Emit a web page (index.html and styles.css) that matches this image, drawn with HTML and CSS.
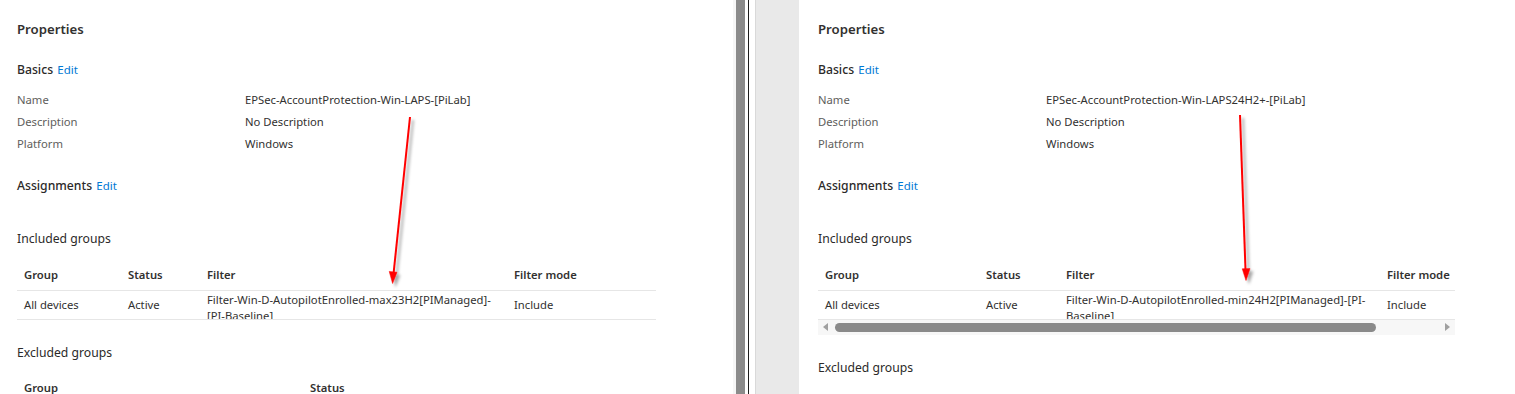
FILE: index.html
```html
<!DOCTYPE html>
<html lang="en">
<head>
<meta charset="utf-8">
<title>Properties</title>
<link rel="stylesheet" href="styles.css">
</head>
<body>
<div class="screen">
  <section class="pane pane-left">
    <h1 class="title">Properties</h1>
    <div class="section-head">Basics <a class="edit">Edit</a></div>
    <div class="props">
      <div class="prop"><span class="prop-label">Name</span><span class="prop-value">EPSec-AccountProtection-Win-LAPS-[PiLab]</span></div>
      <div class="prop"><span class="prop-label">Description</span><span class="prop-value">No Description</span></div>
      <div class="prop"><span class="prop-label">Platform</span><span class="prop-value">Windows</span></div>
    </div>
    <div class="section-head">Assignments <a class="edit">Edit</a></div>
    <div class="group-title">Included groups</div>
    <table class="grid grid-left">
      <colgroup><col class="c-group-l"><col class="c-status-l"><col class="c-filter-l"><col class="c-mode-l"></colgroup>
      <thead><tr><th>Group</th><th>Status</th><th>Filter</th><th>Filter mode</th></tr></thead>
      <tbody><tr><td>All devices</td><td>Active</td><td class="filter-cell"><div class="filter-text">Filter-Win-D-AutopilotEnrolled-max23H2[PIManaged]-<br>[PI-Baseline]</div></td><td>Include</td></tr></tbody>
    </table>
    <div class="group-title group-title-ex">Excluded groups</div>
    <table class="grid grid-ex">
      <colgroup><col class="c-group-ex"><col class="c-status-ex"></colgroup>
      <thead><tr><th>Group</th><th>Status</th></tr></thead>
    </table>
  </section>

  <div class="splitter">
    <div class="splitter-edge"></div>
    <div class="splitter-bar"></div>
    <div class="splitter-gap"></div>
    <div class="splitter-line"></div>
    <div class="splitter-gap2"></div>
    <div class="gutter"></div>
  </div>

  <section class="pane pane-right">
    <h1 class="title">Properties</h1>
    <div class="section-head">Basics <a class="edit">Edit</a></div>
    <div class="props">
      <div class="prop"><span class="prop-label">Name</span><span class="prop-value">EPSec-AccountProtection-Win-LAPS24H2+-[PiLab]</span></div>
      <div class="prop"><span class="prop-label">Description</span><span class="prop-value">No Description</span></div>
      <div class="prop"><span class="prop-label">Platform</span><span class="prop-value">Windows</span></div>
    </div>
    <div class="section-head">Assignments <a class="edit">Edit</a></div>
    <div class="group-title">Included groups</div>
    <div class="table-viewport">
      <table class="grid grid-right">
        <colgroup><col class="c-group-r"><col class="c-status-r"><col class="c-filter-r"><col class="c-mode-r"></colgroup>
        <thead><tr><th>Group</th><th>Status</th><th>Filter</th><th>Filter mode</th></tr></thead>
        <tbody><tr><td>All devices</td><td>Active</td><td class="filter-cell"><div class="filter-text">Filter-Win-D-AutopilotEnrolled-min24H2[PIManaged]-[PI-<br>Baseline]</div></td><td>Include</td></tr></tbody>
      </table>
    </div>
    <div class="hscroll">
      <span class="arrow arrow-left"></span>
      <span class="thumb"></span>
      <span class="track-rest"></span>
      <span class="arrow arrow-right"></span>
    </div>
    <div class="group-title group-title-ex">Excluded groups</div>
  </section>

  <svg class="annotations" width="1515" height="394" viewBox="0 0 1515 394" xmlns="http://www.w3.org/2000/svg">
    <defs>
      <filter id="shadow" x="-50%" y="-10%" width="200%" height="120%">
        <feDropShadow dx="3" dy="3" stdDeviation="1.6" flood-color="#000" flood-opacity="0.35"/>
      </filter>
    </defs>
    <g filter="url(#shadow)" fill="#ff0000" stroke="#ff0000">
      <line x1="410" y1="117" x2="393.6" y2="273" stroke-width="2"/>
      <polygon points="392.6,283.5 389.2,271.4 397.0,272.2" stroke-width="0.5"/>
      <line x1="1240" y1="115" x2="1245.5" y2="270" stroke-width="2"/>
      <polygon points="1246,280.5 1242.2,268.8 1250,268.6" stroke-width="0.5"/>
    </g>
  </svg>
</div>
</body>
</html>
```

FILE: styles.css
```css
* { box-sizing: border-box; }

html, body {
  margin: 0;
  padding: 0;
  background: #ffffff;
}

.screen {
  position: relative;
  display: flex;
  width: 1515px;
  height: 394px;
  overflow: hidden;
  font-family: "Noto Sans", "Open Sans", sans-serif;
  color: #323130;
  font-size: 11.25px;
}

.pane {
  background: #ffffff;
  padding-top: 19px;
  flex: none;
}

.pane-left {
  width: 733px;
  padding-left: 17px;
}

.pane-right {
  width: 716px;
  padding-left: 19px;
}

.title {
  margin: 0;
  font-size: 13.2px;
  line-height: 20px;
  height: 20px;
  font-weight: 600;
  color: #323130;
}

.section-head {
  margin-top: 21px;
  height: 20px;
  font-size: 12.2px;
  line-height: 20px;
  font-weight: 500;
  color: #2b2a29;
}

.edit {
  margin-left: 1px;
  color: #0078d4;
  font-weight: 400;
  font-size: 11.5px;
  line-height: 1;
  text-decoration: none;
}

.props {
  margin-top: 9px;
}

.prop {
  display: flex;
  height: 22px;
  line-height: 22px;
}

.prop-label {
  width: 228px;
  flex: none;
  color: #605e5c;
}

.prop-value {
  color: #323130;
}

.group-title {
  margin-top: 32px;
  height: 20px;
  padding-top: 2px;
  font-size: 12.2px;
  line-height: 18px;
  color: #2b2a29;
}

.group-title-ex {
  margin-top: 22px;
}

.grid {
  margin-top: 10px;
  border-collapse: collapse;
  table-layout: fixed;
}

.grid th,
.grid td {
  padding: 0 0 0 7px;
  text-align: left;
  vertical-align: middle;
  white-space: nowrap;
  overflow: hidden;
  border-bottom: 1px solid #e6e6e6;
}

.grid th {
  height: 32px;
  padding-top: 2px;
  font-weight: 600;
  color: #323130;
}

.grid td {
  height: 28px;
  color: #323130;
}

.filter-cell .filter-text {
  height: 28px;
  padding-top: 1px;
  line-height: 16px;
  overflow: hidden;
}

.grid-left { width: 639px; }
.c-group-l { width: 104px; }
.c-status-l { width: 79px; }
.c-filter-l { width: 307px; }
.c-mode-l { width: 149px; }

.grid-ex { width: 639px; margin-top: 9px; }
.c-group-ex { width: 286px; }
.c-status-ex { width: 353px; }

.table-viewport {
  width: 637px;
  margin-top: 10px;
  overflow: hidden;
}

.table-viewport .grid {
  margin-top: 0;
}

.grid-right { width: 716px; }
.c-group-r { width: 161px; }
.c-status-r { width: 80px; }
.c-filter-r { width: 321px; }
.c-mode-r { width: 154px; }

.hscroll {
  display: flex;
  align-items: center;
  width: 637px;
  height: 15px;
  padding: 0 5px;
  background: #f7f7f7;
}

.arrow {
  width: 0;
  height: 0;
  flex: none;
  border-top: 4px solid transparent;
  border-bottom: 4px solid transparent;
}

.arrow-left {
  border-right: 5px solid #a0a0a0;
}

.arrow-right {
  border-left: 5px solid #a0a0a0;
}

.thumb {
  width: 541px;
  height: 9px;
  margin-left: 7px;
  flex: none;
  border-radius: 5px;
  background: #8a8a8a;
}

.track-rest {
  flex: 1;
}

.splitter {
  display: flex;
  flex: none;
  height: 394px;
}

.splitter-edge { width: 3px; background: #f6f6f6; }
.splitter-bar { width: 9px; background: #8b8b8b; }
.splitter-gap { width: 3px; background: #ffffff; }
.splitter-line { width: 1px; background: #1e1e1e; }
.splitter-gap2 { width: 6px; background: #ffffff; }
.gutter { width: 44px; background: #e9e9e9; border-left: 1px solid #d9d9d9; }

.annotations {
  position: absolute;
  left: 0;
  top: 0;
  pointer-events: none;
}
```
